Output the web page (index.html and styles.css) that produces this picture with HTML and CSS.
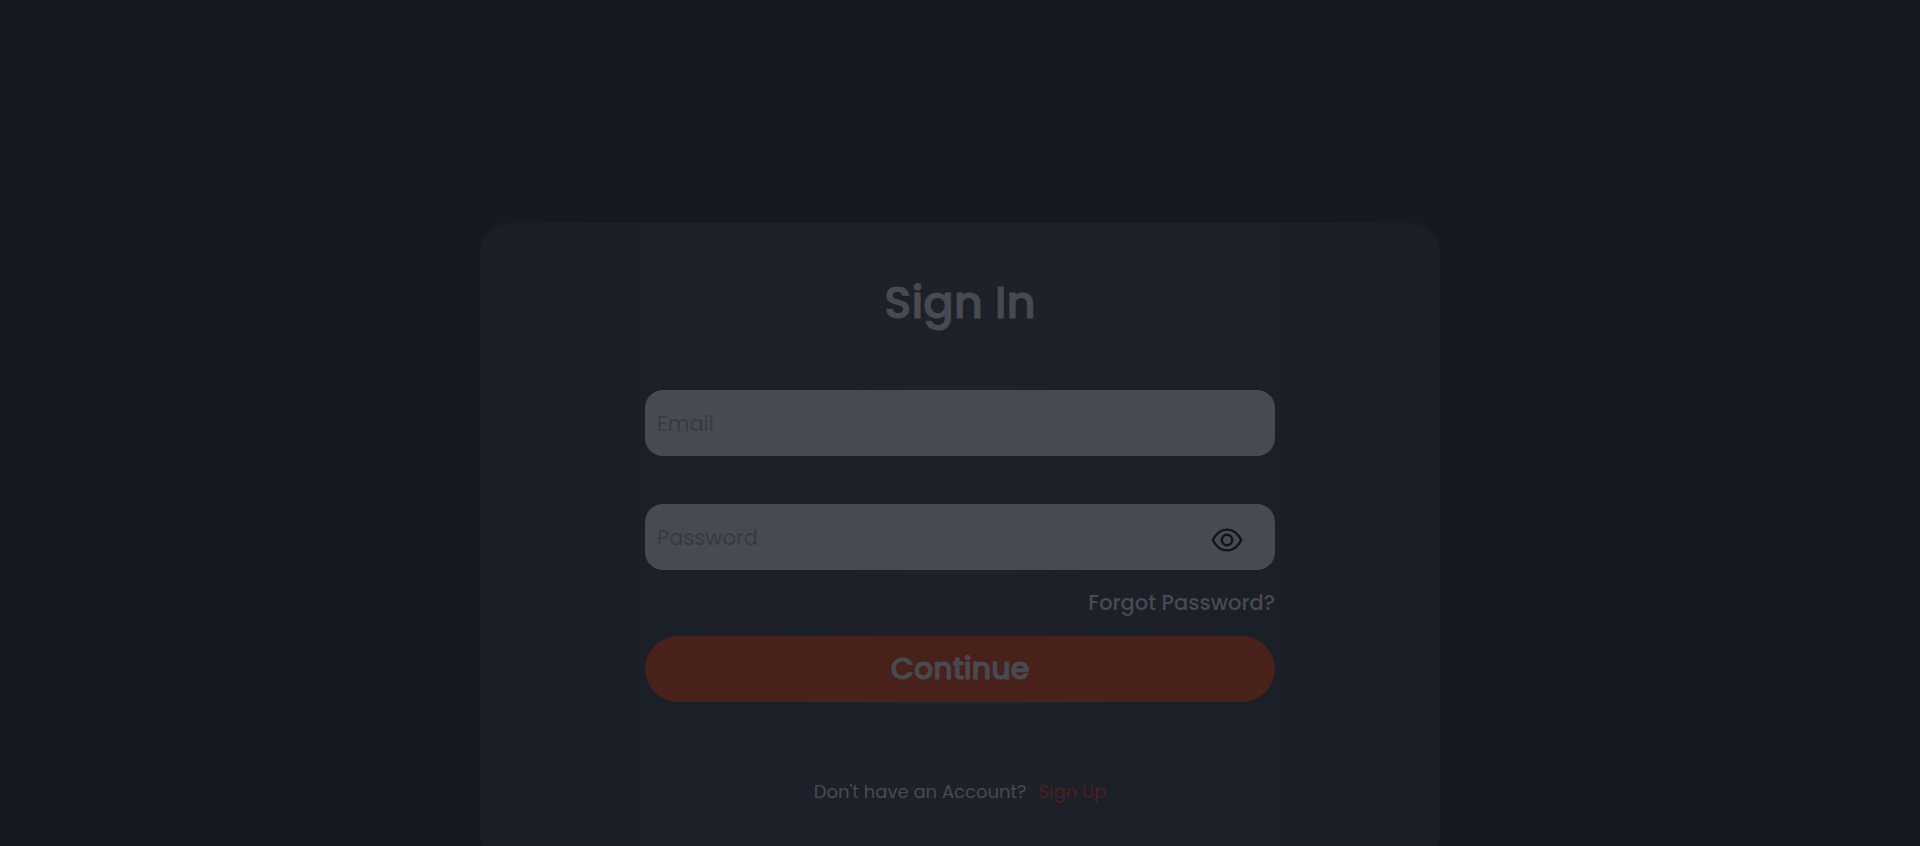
FILE: index.html
```html
<!DOCTYPE html>
<html lang="en">
<head>
<meta charset="utf-8">
<meta name="viewport" content="width=device-width, initial-scale=1">
<title>Sign In</title>
<link rel="stylesheet" href="styles.css">
</head>
<body>
<main class="page">
  <form class="card">
    <h1 class="title">Sign In</h1>
    <div class="fields">
      <div class="field">
        <input class="input" type="email" placeholder="Email" aria-label="Email">
      </div>
      <div class="field">
        <input class="input" type="password" placeholder="Password" aria-label="Password">
        <button class="reveal" type="button" aria-label="Show password">
          <svg class="eye" viewBox="0 0 32 24" fill="none" stroke="currentColor" stroke-width="2.4" stroke-linejoin="round">
            <path d="M1.800 12C5.200 5.200 10 1.600 16 1.600S26.800 5.200 30.200 12C26.800 18.800 22 22.400 16 22.400S5.200 18.800 1.800 12Z"/>
            <circle cx="16" cy="12" r="5.200"/>
          </svg>
        </button>
      </div>
    </div>
    <a class="forgot" href="#forgot">Forgot Password?</a>
    <button class="submit" type="submit">Continue</button>
    <p class="signup">Don't have an Account? <a class="signup-link" href="#signup">Sign Up</a></p>
  </form>
</main>
</body>
</html>
```
FILE: styles.css
```css
* {
  box-sizing: border-box;
}

body {
  margin: 0;
  height: 100vh;
  overflow: hidden;
  background: #151920;
  color: #484a52;
  font-family: Poppins, Inter, sans-serif;
}

.page {
  display: flex;
  justify-content: center;
  padding-top: 223px;
}

.card {
  display: flex;
  flex-direction: column;
  width: 50%;
  padding: 48px 165px;
  border-radius: 30px;
  background: linear-gradient(90deg, #1a1e26, #1e2129 50%, #1a1e26);
}

.title {
  margin: 0 0 55px;
  font-size: 45px;
  font-weight: 500;
  -webkit-text-stroke: 1px currentColor;
  line-height: 64px;
  text-align: center;
}

.fields {
  display: flex;
  flex-direction: column;
  gap: 48px;
}

.field {
  display: flex;
  align-items: center;
  height: 66px;
  border-radius: 18px;
  background: #484a52;
}

.input {
  flex: 1;
  min-width: 0;
  height: 100%;
  padding: 0 12px;
  border: 0;
  outline: 0;
  background: transparent;
  color: #151920;
  font: inherit;
  font-size: 21px;
}

.input::placeholder {
  color: #373a42;
  opacity: 1;
}

.reveal {
  display: flex;
  margin-right: 32px;
  padding: 6px 0 0;
  border: 0;
  background: none;
  color: #10131a;
}

.eye {
  width: 32px;
  height: 24px;
}

.forgot {
  align-self: flex-end;
  margin: 17px 0 17px;
  color: inherit;
  font-size: 21px;
  font-weight: 500;
  line-height: 32px;
  text-decoration: none;
}

.submit {
  height: 66px;
  border: 0;
  border-radius: 33px;
  background: #49211b;
  color: #484a52;
  font: inherit;
  font-size: 30px;
  font-weight: 500;
  -webkit-text-stroke: 1px currentColor;
}

.signup {
  display: flex;
  justify-content: center;
  gap: 12px;
  margin: 76px 0 8px;
  font-size: 18px;
  line-height: 28px;
}

.signup-link {
  color: #49211b;
  text-decoration: none;
}
```
